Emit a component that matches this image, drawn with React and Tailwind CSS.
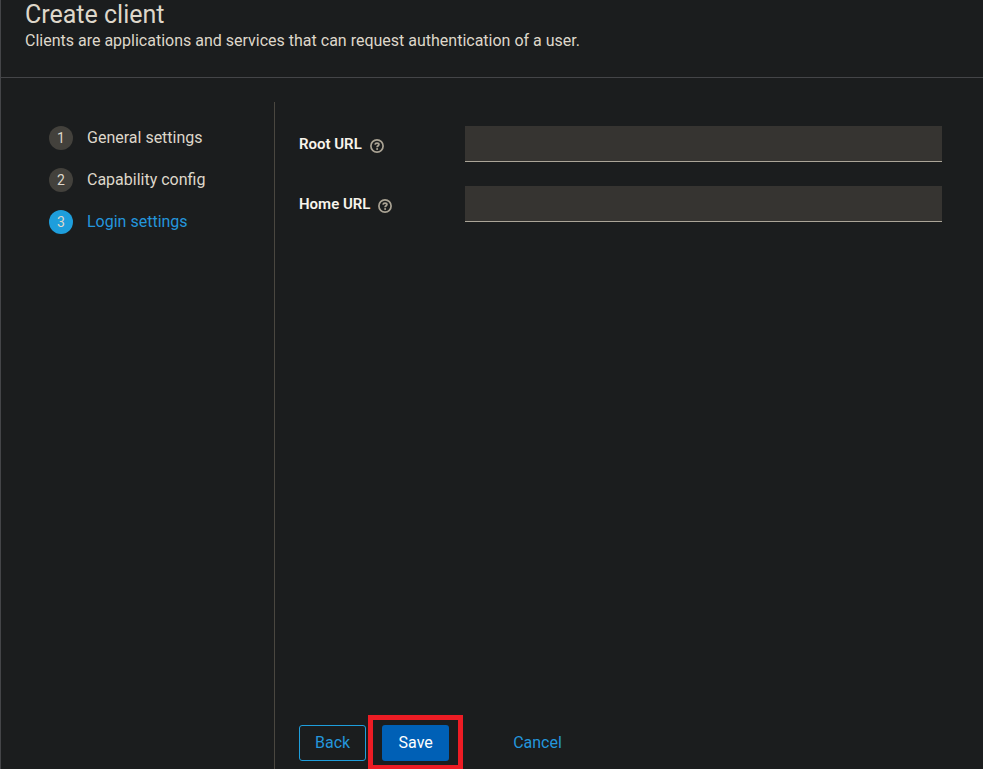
import React, { useState } from "react";

const steps = [
  { id: 1, label: "General settings" },
  { id: 2, label: "Capability config" },
  { id: 3, label: "Login settings" },
];

const fields = [
  { id: "rootUrl", label: "Root URL" },
  { id: "homeUrl", label: "Home URL" },
];

const HelpIcon = () => (
  <svg width="14" height="14" viewBox="0 0 14 14" fill="none" stroke="#aaa394">
    <circle cx="7" cy="7" r="6.1" strokeWidth="1.7" />
    <path d="M5 5.6C5.2 4.6 5.9 4.2 7 4.2c1.1 0 1.9.5 1.9 1.4C8.9 6.7 7.1 6.8 7.1 8.2" strokeWidth="1.8" />
    <circle cx="7.1" cy="9.9" r="1" fill="#aaa394" stroke="none" />
  </svg>
);

const App = () => {
  const [current, setCurrent] = useState(3);
  const [values, setValues] = useState({ rootUrl: "", homeUrl: "" });

  return (
    <div className="flex min-h-screen flex-col border-l border-[#444548] bg-[#1b1d1e] font-['Roboto',sans-serif] text-base text-[#ded7ca]">
      <header className="border-b border-[#444548] px-6 pb-6">
        <h1 className="text-[25px] leading-[29px]">Create client</h1>
        <p>Clients are applications and services that can request authentication of a user.</p>
      </header>

      <div className="flex flex-1 pt-6">
        {/* Steps */}
        <nav aria-label="Wizard steps" className="w-[274px] shrink-0 border-r border-[#4a4740] px-12 pt-6">
          <ol className="flex flex-col gap-[18px]">
            {steps.map((step) => (
              <li key={step.id}>
                <button
                  type="button"
                  onClick={() => setCurrent(step.id)}
                  aria-current={current === step.id ? "step" : undefined}
                  className={`flex items-center gap-3.5 whitespace-nowrap ${current === step.id ? "text-[#2496dc]" : ""}`}
                >
                  <span
                    className={`flex size-6 items-center justify-center rounded-full text-sm text-[#ded7ca] ${
                      current === step.id ? "bg-[#1e9edc]" : "bg-[#43413c]"
                    }`}
                  >
                    {step.id}
                  </span>
                  {step.label}
                </button>
              </li>
            ))}
          </ol>
        </nav>

        <main className="flex flex-1 flex-col pl-6">
          <form className="flex flex-1 flex-col" onSubmit={(e) => e.preventDefault()}>
            <div className="flex flex-1 flex-col gap-6 pt-6 pr-[41px]">
              {fields.map((field) => (
                <div key={field.id} className="flex">
                  <div className="flex w-[166px] shrink-0 items-center gap-2">
                    <label htmlFor={field.id} className="text-[15px] font-semibold text-[#f8f4ec]">
                      {field.label}
                    </label>
                    <button type="button" aria-label={`Help for ${field.label}`} className="pt-1">
                      <HelpIcon />
                    </button>
                  </div>
                  <input
                    id={field.id}
                    type="text"
                    value={values[field.id]}
                    onChange={(e) => setValues({ ...values, [field.id]: e.target.value })}
                    className="h-9 min-w-0 flex-1 border-b border-[#aba598] bg-[#363431] px-2 outline-none"
                  />
                </div>
              ))}
            </div>

            {/* Actions */}
            <footer className="flex gap-4 pb-2">
              <button type="button" className="h-9 min-w-[67px] rounded-[3px] border border-[#1e9edc] px-[15px] text-[#2496dc]">
                Back
              </button>
              <div className="relative">
                <button type="submit" className="h-9 min-w-[67px] rounded-[3px] bg-[#0060b6] px-4 text-white">
                  Save
                </button>
                <div className="pointer-events-none absolute -inset-x-3.5 -top-2.5 -bottom-2 border-5 border-b-4 border-[#ed1c24]"></div>
              </div>
              <button type="button" className="ml-8 h-9 px-4 text-[#2496dc]">
                Cancel
              </button>
            </footer>
          </form>
        </main>
      </div>
    </div>
  );
};

export default App;
